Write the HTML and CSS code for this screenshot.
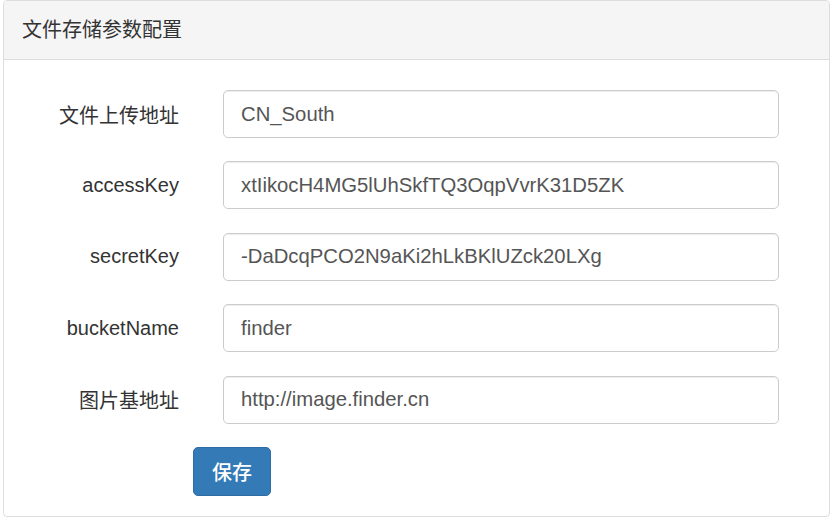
FILE: index.html
```html
<!DOCTYPE html>
<html lang="zh-CN">

<head>
    <meta charset="UTF-8">
    <meta name="viewport" content="width=device-width, initial-scale=1.0">
    <title>文件存储参数配置</title>
    <link rel="stylesheet" href="styles.css">
</head>

<body>
    <div class="panel">
        <div class="panel-heading">文件存储参数配置</div>
        <div class="panel-body">
            <form class="form-horizontal">
                <div class="form-group">
                    <label class="control-label">文件上传地址</label>
                    <input class="form-control" type="text" value="CN_South">
                </div>
                <div class="form-group">
                    <label class="control-label">accessKey</label>
                    <input class="form-control" type="text" value="xtIikocH4MG5lUhSkfTQ3OqpVvrK31D5ZK">
                </div>
                <div class="form-group">
                    <label class="control-label">secretKey</label>
                    <input class="form-control" type="text" value="-DaDcqPCO2N9aKi2hLkBKlUZck20LXg">
                </div>
                <div class="form-group">
                    <label class="control-label">bucketName</label>
                    <input class="form-control" type="text" value="finder">
                </div>
                <div class="form-group">
                    <label class="control-label">图片基地址</label>
                    <input class="form-control" type="text" value="http://image.finder.cn">
                </div>
                <div class="form-actions">
                    <button type="button" class="btn btn-primary">保存</button>
                </div>
            </form>
        </div>
    </div>
</body>

</html>
```

FILE: styles.css
```css
body {
    margin: 0;
    padding: 0 1px 0 3px;
    font-family: "Liberation Sans", Arial, "Noto Sans CJK SC", sans-serif;
    font-size: 20px;
    color: #333;
    background: #fff;
}

.panel {
    border: 1px solid #ddd;
    border-radius: 4px;
    height: 517px;
    box-sizing: border-box;
    overflow: hidden;
}

.panel-heading {
    background-color: #f5f5f5;
    border-bottom: 1px solid #ddd;
    height: 58px;
    line-height: 58px;
    padding-left: 18px;
    color: #333;
}

.panel-body {
    padding-top: 30px;
}

.form-group {
    display: grid;
    grid-template-columns: 175px 556px;
    column-gap: 44px;
    align-items: center;
    margin-bottom: 23.4px;
}

.control-label {
    text-align: right;
    color: #333;
}

.form-control {
    height: 48px;
    box-sizing: border-box;
    border: 1px solid #ccc;
    border-radius: 5px;
    padding: 0 17px;
    font-family: inherit;
    font-size: 20.3px;
    color: #555;
    box-shadow: inset 0 1px 1px rgba(0, 0, 0, .075);
    outline: none;
}

.form-actions {
    padding-left: 189px;
}

.btn {
    height: 49px;
    padding: 0 18px;
    font-family: inherit;
    font-size: 20px;
    font-weight: 500;
    border-radius: 5px;
    cursor: pointer;
}

.btn-primary {
    color: #fff;
    background-color: #337ab7;
    border: 1px solid #2e6da4;
}
```
